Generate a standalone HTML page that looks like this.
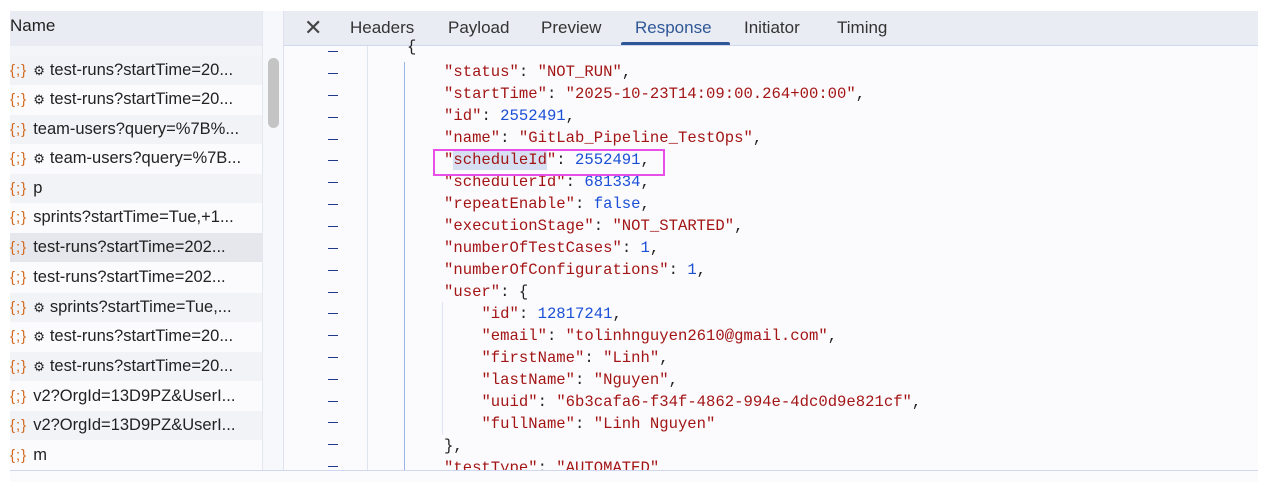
<!DOCTYPE html>
<html><head><style>
body{margin:0;width:1278px;height:504px;background:#fff;position:relative;overflow:hidden;font-family:"Liberation Sans",sans-serif}
.a{position:absolute}
.row{position:absolute;left:10px;width:252px;height:29px;font-size:16.5px;color:#222;line-height:29px;white-space:nowrap;overflow:hidden}
.ic{color:#d2691e;font-size:15px;margin-right:6px;letter-spacing:1px}
.g{font-size:13px;margin-right:5px}
.code{position:absolute;font-family:"Liberation Mono",monospace;font-size:15.6px;white-space:pre;line-height:22px;color:#222}
.k{color:#a31515}.s{color:#a31515}.n{color:#1a4fd6}
.d{position:absolute;left:328px;width:10px;height:1px;background:#1f3a8a}
.tab{position:absolute;top:11px;height:34px;line-height:34px;font-size:17px;color:#333}
</style></head><body>
<div class="a" style="left:10px;top:11px;width:1248px;height:471px;background:#fbfbfe"></div>
<div class="a" style="left:10px;top:11px;width:252px;height:35px;background:#e9ecf3;border-bottom:1px solid #cfd8ee"></div>
<div class="a" style="left:10px;top:16px;font-size:17px;color:#222">Name</div>
<div class="a" style="left:262px;top:11px;width:20px;height:471px;background:#f7f8fb;border-left:1px solid #e5e7ee"></div>
<div class="a" style="left:268px;top:58px;width:11px;height:70px;background:#c4c4c4;border-radius:6px"></div>
<div class="a" style="left:283px;top:11px;width:1px;height:471px;background:#dde2ee"></div>
<div class="a" style="left:284px;top:11px;width:974px;height:34px;background:#e9ecf3;border-bottom:1px solid #cfd8ee"></div>
<div class="tab" style="left:304px;font-size:22px;color:#444">✕</div>
<div class="tab" style="left:350px">Headers</div>
<div class="tab" style="left:448px">Payload</div>
<div class="tab" style="left:541px">Preview</div>
<div class="tab" style="left:635px;color:#2f5797">Response</div>
<div class="a" style="left:621px;top:42px;width:109px;height:3px;background:#2f5797;border-radius:2px 2px 0 0"></div>
<div class="tab" style="left:744px">Initiator</div>
<div class="tab" style="left:837px">Timing</div>

<div class="row" style="top:46px;height:10px;background:#f4f5f8"></div>
<div class="row" style="top:56px;background:#f2f3f7"><span class="ic">{;}</span><span class="g">⚙</span>test-runs?startTime=20...</div>
<div class="row" style="top:85px;background:#fbfbfe"><span class="ic">{;}</span><span class="g">⚙</span>test-runs?startTime=20...</div>
<div class="row" style="top:115px;background:#f2f3f7"><span class="ic">{;}</span>team-users?query=%7B%...</div>
<div class="row" style="top:144px;background:#fbfbfe"><span class="ic">{;}</span><span class="g">⚙</span>team-users?query=%7B...</div>
<div class="row" style="top:174px;background:#f2f3f7"><span class="ic">{;}</span>p</div>
<div class="row" style="top:203px;background:#fbfbfe"><span class="ic">{;}</span>sprints?startTime=Tue,+1...</div>
<div class="row" style="top:233px;background:#e6e7ec"><span class="ic">{;}</span>test-runs?startTime=202...</div>
<div class="row" style="top:263px;background:#fbfbfe"><span class="ic">{;}</span>test-runs?startTime=202...</div>
<div class="row" style="top:293px;background:#f2f3f7"><span class="ic">{;}</span><span class="g">⚙</span>sprints?startTime=Tue,...</div>
<div class="row" style="top:322px;background:#fbfbfe"><span class="ic">{;}</span><span class="g">⚙</span>test-runs?startTime=20...</div>
<div class="row" style="top:352px;background:#f2f3f7"><span class="ic">{;}</span><span class="g">⚙</span>test-runs?startTime=20...</div>
<div class="row" style="top:382px;background:#fbfbfe"><span class="ic">{;}</span>v2?OrgId=13D9PZ&amp;UserI...</div>
<div class="row" style="top:411px;background:#f2f3f7"><span class="ic">{;}</span>v2?OrgId=13D9PZ&amp;UserI...</div>
<div class="row" style="top:441px;background:#fbfbfe"><span class="ic">{;}</span>m</div>

<div class="a" style="left:367px;top:46px;width:1px;height:424px;background:#dfe4f0"></div>
<div class="a" style="left:404px;top:62px;width:1px;height:408px;background:#9bb5e8"></div>
<div class="a" style="left:442px;top:302px;width:1px;height:133px;background:#dde4f5"></div>

<div class="d" style="top:51px"></div><div class="d" style="top:73px"></div><div class="d" style="top:95px"></div><div class="d" style="top:117px"></div><div class="d" style="top:139px"></div><div class="d" style="top:160px"></div><div class="d" style="top:182px"></div><div class="d" style="top:204px"></div><div class="d" style="top:226px"></div><div class="d" style="top:248px"></div><div class="d" style="top:270px"></div><div class="d" style="top:292px"></div><div class="d" style="top:313px"></div><div class="d" style="top:335px"></div><div class="d" style="top:357px"></div><div class="d" style="top:379px"></div><div class="d" style="top:401px"></div><div class="d" style="top:422px"></div><div class="d" style="top:444px"></div><div class="d" style="top:466px"></div>

<div class="a" style="left:453px;top:151px;width:94px;height:19px;background:#d6e0f2"></div>
<div class="code" style="left:407px;top:36px">{</div>
<div class="code" style="left:444px;top:61px"><span class="k">"status"</span>: <span class="s">"NOT_RUN"</span>,
<span class="k">"startTime"</span>: <span class="s">"2025-10-23T14:09:00.264+00:00"</span>,
<span class="k">"id"</span>: <span class="n">2552491</span>,
<span class="k">"name"</span>: <span class="s">"GitLab_Pipeline_TestOps"</span>,
<span class="k">"scheduleId"</span>: <span class="n">2552491</span>,
<span class="k">"schedulerId"</span>: <span class="n">681334</span>,
<span class="k">"repeatEnable"</span>: <span class="n">false</span>,
<span class="k">"executionStage"</span>: <span class="s">"NOT_STARTED"</span>,
<span class="k">"numberOfTestCases"</span>: <span class="n">1</span>,
<span class="k">"numberOfConfigurations"</span>: <span class="n">1</span>,
<span class="k">"user"</span>: {
    <span class="k">"id"</span>: <span class="n">12817241</span>,
    <span class="k">"email"</span>: <span class="s">"tolinhnguyen2610@gmail.com"</span>,
    <span class="k">"firstName"</span>: <span class="s">"Linh"</span>,
    <span class="k">"lastName"</span>: <span class="s">"Nguyen"</span>,
    <span class="k">"uuid"</span>: <span class="s">"6b3cafa6-f34f-4862-994e-4dc0d9e821cf"</span>,
    <span class="k">"fullName"</span>: <span class="s">"Linh Nguyen"</span>
},
<span class="k">"testType"</span>: <span class="s">"AUTOMATED"</span>,</div>
<div class="a" style="left:10px;top:471px;width:1248px;height:33px;background:#fff"></div>
<div class="a" style="left:10px;top:470px;width:1248px;height:1px;background:#cfd8ee"></div>
<div class="a" style="left:10px;top:471px;width:1248px;height:11px;background:#fbfbfe"></div>
<div class="a" style="left:433px;top:149px;width:232px;height:27px;border:2px solid #e84ee8;box-sizing:border-box"></div>
</body></html>
